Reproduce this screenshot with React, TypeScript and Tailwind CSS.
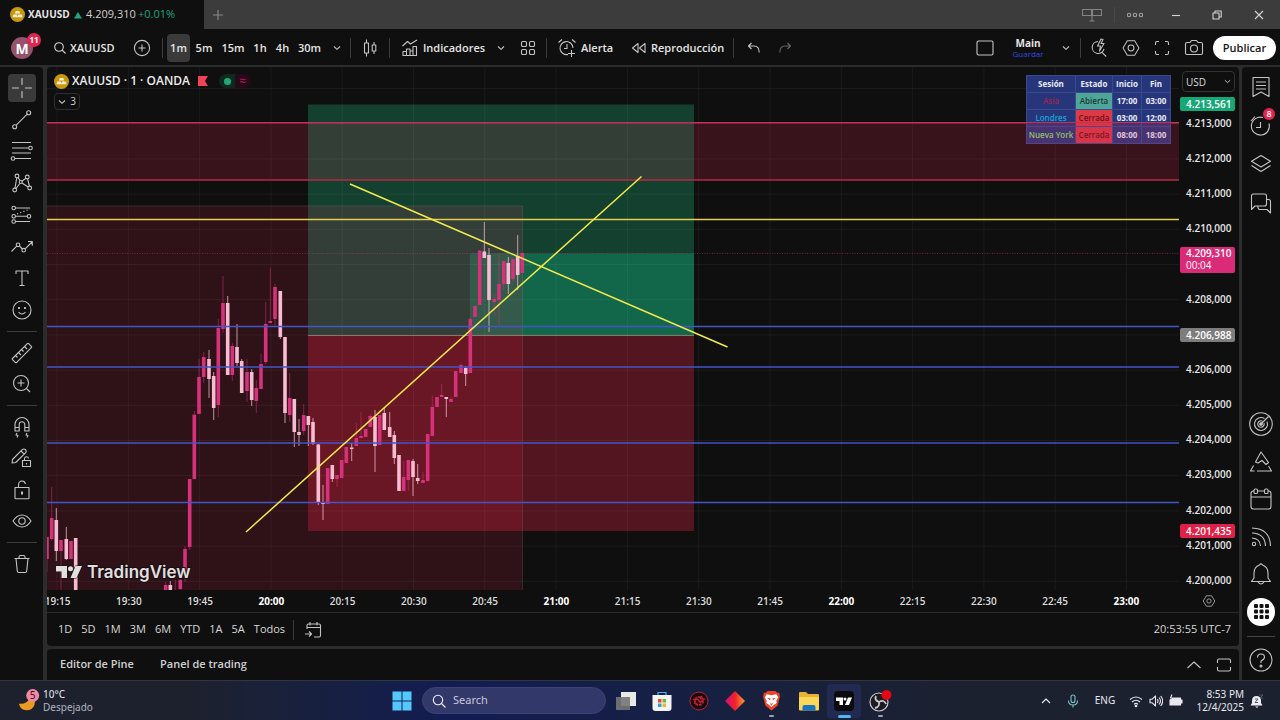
import type { ReactNode } from "react";

const APP_FONT = "font-['Open_Sans','Noto_Sans',sans-serif]";

function Icon({ children, size = "size-6", color = "text-[#c4c4c4]", box = 24 }: { children: ReactNode; size?: string; color?: string; box?: number }) {
  return (
    <svg viewBox={`0 0 ${box} ${box}`} className={`${size} ${color} shrink-0`} fill="none" stroke="currentColor" strokeWidth="1.1" strokeLinejoin="round" aria-hidden="true">
      {children}
    </svg>
  );
}

function Gold({ size }: { size: string }) {
  return (
    <svg viewBox="0 0 16 16" className={`${size} shrink-0`} aria-hidden="true">
      <circle cx="8" cy="8" r="8" fill="#c9980f" />
      <path d="M6.2 4.3h3.6l1 2.7H5.2zM3.6 8h3.7l.9 2.8H2.7zM8.7 8h3.7l.9 2.8H7.8z" fill="#f7efd8" />
    </svg>
  );
}

function Chevron({ className = "size-2" }: { className?: string }) {
  return (
    <svg viewBox="0 0 8 8" className={`${className} shrink-0 text-[#c4c4c4]`} fill="none" stroke="currentColor" strokeWidth="1.1" aria-hidden="true">
      <path d="M1 2.5 4 5.3 7 2.5" />
    </svg>
  );
}

function Divider() {
  return <span className="h-5 w-px shrink-0 bg-[#3c3c3c]" />;
}

function Hexagon({ size }: { size: string }) {
  return (
    <Icon size={size}>
      <path d="M8 4.2h8L20.7 12 16 19.8H8L3.3 12z" />
      <circle cx="12" cy="12" r="3.2" />
    </Icon>
  );
}

function TitleBar() {
  return (
    <header className="flex h-[29px] shrink-0 bg-[#3c3c3c] text-[11px]">
      <div className="flex w-[204px] items-center bg-[#0f0f0f] pl-[10px]">
        <Gold size="size-[15px]" />
        <span className="ml-[3px] w-[43px] text-[10px] font-bold text-[#e4e4e4]">XAUUSD</span>
        <svg viewBox="0 0 8 8" className="ml-[3px] size-2 shrink-0" aria-hidden="true"><path d="M4 1 8 7.5H0z" fill="#22a47c" /></svg>
        <span className="ml-[4px] w-[48px] whitespace-nowrap text-[#d0d0d0]">4.209,310</span>
        <span className="ml-1 text-[#22a47c]">+0.01%</span>
      </div>
      <button aria-label="Nueva pestaña" className="flex w-7 items-center justify-center">
        <Icon size="size-3" color="text-[#8a8a8a]" box={12}><path d="M6 1v10M1 6h10" /></Icon>
      </button>
      <div className="ml-auto flex items-center">
        <button aria-label="Vistas" className="flex w-[44px] justify-center">
          <Icon size="size-5" color="text-[#858585]" box={20}><path d="M.5 4.5h9v6h-9zM10.500 4.500h9v6h-9zM10 4v12M7.500 16h5" /></Icon>
        </button>
        <button aria-label="Más" className="flex w-[41px] justify-center border-l border-[#4a4a4a]">
          <Icon size="size-4" color="text-[#a0a0a0]" box={16}><circle cx="2" cy="8" r="1.700" /><circle cx="8" cy="8" r="1.700" /><circle cx="14" cy="8" r="1.700" /></Icon>
        </button>
        <button aria-label="Minimizar" className="flex w-[41px] justify-center"><Icon size="size-3" color="text-[#d4d4d4]" box={12}><path d="M2 6.500h8" /></Icon></button>
        <button aria-label="Restaurar" className="flex w-[42px] justify-center"><Icon size="size-3" color="text-[#d4d4d4]" box={12}><path d="M2 4h6v6H2zM4 4V2h6.200v6H8" /></Icon></button>
        <button aria-label="Cerrar" className="mr-px flex w-[41px] justify-center"><Icon size="size-3" color="text-[#d4d4d4]" box={12}><path d="m2 2 8 8M10 2l-8 8" /></Icon></button>
      </div>
    </header>
  );
}

const intervals = [
  { label: "1m", width: "w-[23px] bg-[#3a3a3a]" },
  { label: "5m", width: "w-[28px]" },
  { label: "15m", width: "w-[30px]" },
  { label: "1h", width: "w-[24px]" },
  { label: "4h", width: "w-[21px]" },
  { label: "30m", width: "w-[33px]" },
];

function Toolbar() {
  return (
    <nav className="flex h-9 shrink-0 items-center bg-[#0f0f0f] pt-[2px] text-[11px] font-semibold text-[#e4e4e4]">
      <button aria-label="Perfil" className="relative ml-[11px] flex size-[22px] items-center justify-center rounded-full bg-[#96526d] text-[14px] font-bold text-white">
        M
        <span className="absolute -top-1 left-[16px] flex size-[14px] items-center justify-center rounded-full bg-[#e0264e] text-[8px] leading-none font-bold">11</span>
      </button>
      <button className="ml-[21px] flex w-[63px] items-center gap-1 whitespace-nowrap">
        <Icon size="size-3" color="text-[#d8d8d8]" box={12}><circle cx="5" cy="5" r="4.300" /><path d="m8.200 8.200 3.300 3.300" /></Icon>
        XAUUSD
      </button>
      <button aria-label="Comparar" className="ml-[15px] flex size-5 items-center justify-center">
        <Icon size="size-[18px]" box={18}><circle cx="9" cy="9" r="7.600" /><path d="M9 5.500v7M5.500 9h7" /></Icon>
      </button>
      <span className="w-[10px]" />
      <Divider />
      <div className="ml-1 flex items-center">
        {intervals.map((i) => (
          <button key={i.label} className={`${i.width} h-7 rounded text-center`}>{i.label}</button>
        ))}
      </div>
      <button aria-label="Intervalos" className="flex w-[21px] justify-center"><Chevron /></button>
      <span className="w-[3px]" />
      <Divider />
      <button aria-label="Velas" className="flex w-[38px] justify-center">
        <Icon size="size-5" box={20}><path d="M6.500 1.500V5M6.500 15v3.500M4.500 5h4v10h-4zM14 4v3M14 13v3M12.200 7h3.600v6h-3.600z" /></Icon>
      </button>
      <Divider />
      <button className="ml-[11px] flex w-[86px] items-center gap-1">
        <Icon size="size-[18px]" box={18}><path d="m1.500 7 5-4.500 3 2.500 6.500-4M2 16.500v-4h3.500v4zM5.500 16.500V10H9v6.500zM9 16.500V12h3v4.500M12 16.500v-9h3.500v9zM9 16.500h3" /></Icon>
        Indicadores
      </button>
      <button aria-label="Favoritos" className="flex w-[28px] justify-center"><Chevron /></button>
      <button aria-label="Plantillas" className="flex w-[25px] justify-center">
        <Icon size="size-4" box={16}><rect x="1.500" y="1.500" width="5" height="5" rx="1.300" /><rect x="9.500" y="1.500" width="5" height="5" rx="1.300" /><rect x="1.500" y="9.500" width="5" height="5" rx="1.300" /><rect x="9.500" y="9.500" width="5" height="5" rx="1.300" /></Icon>
      </button>
      <span className="w-1.5" />
      <Divider />
      <button className="ml-[10px] flex w-[62px] items-center gap-1">
        <Icon size="size-5" box={20}><path d="M16 10a6.500 6.500 0 1 0-5 6.400M10 6v4.500H7M1.500 4.500l3.500-3M15 1.500l3.500 3M14.500 12v7M11 15.500h7" /></Icon>
        Alerta
      </button>
      <button className="ml-[12px] flex w-[96px] items-center gap-1">
        <Icon size="size-4" box={16}><path d="M7 3.500v9L1.500 8zM14 3.500v9L8.500 8z" /></Icon>
        Reproducción
      </button>
      <span className="w-[6px]" />
      <Divider />
      <button aria-label="Deshacer" className="ml-[10px] flex w-5 justify-center">
        <Icon size="size-4" box={16}><path d="M5.500 3 2.500 6l3 3M2.500 6H8q5.200 0 5.200 6.500" /></Icon>
      </button>
      <button aria-label="Rehacer" className="ml-[11px] flex w-5 justify-center">
        <Icon size="size-4" color="text-[#666666]" box={16}><path d="m10.500 3 3 3-3 3M13.500 6H8q-5.200 0-5.200 6.500" /></Icon>
      </button>
      <div className="ml-auto flex items-center">
        <button aria-label="Diseño" className="flex w-5 justify-center">
          <Icon size="size-[18px]" box={18}><rect x="1" y="2" width="16" height="14" rx="1.500" /></Icon>
        </button>
        <button className="ml-[13px] flex w-[40px] flex-col items-center">
          <span className="text-[10px] leading-[12px] font-bold">Main</span>
          <span className="text-[8px] leading-[10px] font-normal text-[#3249e0]">Guardar</span>
        </button>
        <button aria-label="Diseños guardados" className="ml-[7px] flex w-[22px] justify-center"><Chevron /></button>
        <span className="w-[3px]" />
        <Divider />
        <button aria-label="Búsqueda rápida" className="ml-[8px] flex w-5 justify-center">
          <Icon size="size-5" box={20}><path d="M9 3.500a6 6 0 1 0 6 7.500M13.200 14.700l4 3.800M12 1 8.500 8h3l-1 5 4.500-7.500h-3L14 1.500z" /></Icon>
        </button>
        <button aria-label="Ajustes" className="ml-[12px] flex w-5 justify-center"><Hexagon size="size-[22px]" /></button>
        <button aria-label="Pantalla completa" className="ml-[11px] flex w-5 justify-center">
          <Icon size="size-4" box={16}><path d="M1.500 5V3q0-1.500 1.500-1.500h2M11 1.500h2q1.500 0 1.500 1.500v2M14.500 11v2q0 1.500-1.500 1.500h-2M5 14.500H3q-1.500 0-1.500-1.500v-2" /></Icon>
        </button>
        <button aria-label="Captura" className="ml-[12px] flex w-5 justify-center">
          <Icon size="size-5" box={20}><path d="M3 4.500h3l1.500-2h5l1.500 2h3q1.500 0 1.500 1.500v9q0 1.500-1.500 1.500H3q-1.500 0-1.500-1.500V6Q1.500 4.500 3 4.500z" /><circle cx="10" cy="10.500" r="3.500" /></Icon>
        </button>
        <button className="mr-1 ml-[9px] h-6 w-[63px] rounded-full bg-white text-[#161616]">Publicar</button>
      </div>
    </nav>
  );
}

const drawIcons: { name: string; art: ReactNode }[] = [
  { name: "Cruz", art: <path d="M2 12h7M15 12h7M12 2v7M12 15v7" /> },
  { name: "Línea de tendencia", art: <><circle cx="4.700" cy="18.700" r="2" /><circle cx="18.700" cy="4.700" r="2" /><path d="M6.200 17.200 17.200 6.200" /></> },
  { name: "Fibonacci", art: <><path d="M2 3.500h19M2 9h16.500M2 14h19M5 19.500h16" /><circle cx="20.500" cy="9" r="1.800" /><circle cx="3" cy="19.500" r="1.800" /></> },
  { name: "Patrones", art: <><path d="M6.700 7 5 17M7.800 6.500l2.400 3.200M11.800 10.200l4.200-3M17.600 8l1.800 7M12 12l6 4M9.800 12.500 6 17.500" /><circle cx="7" cy="5" r="1.900" /><circle cx="17.300" cy="6" r="1.900" /><circle cx="19.700" cy="17" r="1.900" /><circle cx="4.700" cy="19" r="1.900" /><circle cx="10.700" cy="11" r="1.500" /></> },
  { name: "Previsión", art: <><circle cx="3.700" cy="5" r="1.800" /><circle cx="3.700" cy="13.300" r="1.800" /><circle cx="19" cy="13.300" r="1.800" /><circle cx="3.700" cy="18.500" r="1.800" /><path d="M5.500 5H20M5.500 13.300h11.700M5.500 18.500H20" /><path d="m7 11 13-5" strokeDasharray="1.200 2.200" /></> },
  { name: "Patrón de flecha", art: <><path d="m1.500 16.500 5.200-5.300M9.500 11l2.800 3M15.200 13.800 22 7M18 6.500h4.300v4.300" /><circle cx="8" cy="9.800" r="1.800" /><circle cx="13.700" cy="15.200" r="1.800" /></> },
  { name: "Texto", art: <path d="M6 8V5h12v3M12 5v14.500M9.500 19.500h5" /> },
  { name: "Emojis", art: <><circle cx="12" cy="12" r="9" /><path d="M8.500 14q3.500 4 7 0" /><path d="M9 9v2M15 9v2" strokeWidth="1.800" /></> },
];

const measureIcons: { name: string; art: ReactNode }[] = [
  { name: "Medir", art: <path d="M2.500 17.500 17.300 2.700q.7-.7 1.400 0l2.600 2.600q.7.700 0 1.400L6.700 21.300q-.7.700-1.400 0l-2.800-2.600q-.7-.7 0-1.200zM5.500 14.500l2 2M8.500 11.500l2.500 2.500M11.500 8.500l2 2M14.500 5.500l2.500 2.500" /> },
  { name: "Acercar", art: <><circle cx="11" cy="11" r="7.500" /><path d="M11 7.500v7M7.500 11h7M16.500 16.500l3.500 3.500" /></> },
];

const lockIcons: { name: string; art: ReactNode }[] = [
  { name: "Imán", art: <path d="M5 16V9.500a7 7 0 0 1 14 0V16h-4.200V9.500a2.800 2.800 0 0 0-5.600 0V16zM5 12.500h4.200M14.800 12.500H19M7 18l-1 2 2 .5-1 2M17 18l-1 2 2 .5-1 2" /> },
  { name: "Mantener dibujo", art: <path d="m2.500 13.500 9.700-9.800q1.800-1.400 3.300 0 1.500 1.500 0 3.200l-9.800 9.600-3.700.5zM11 5l3.300 3.200M12.500 14.500h8v6h-8zM14.500 14.500V12.500q.2-1.800 2-1.800t2 1.800M16.500 17v1.500" /> },
  { name: "Bloquear", art: <><path d="M5 9.500h14v10.500q0 .8-.8.800H5.800q-.8 0-.8-.8zM8.500 9.500V7q0-4 3.500-4 3 0 3.400 3" /><path d="M12 13.500v3" strokeWidth="2" /></> },
  { name: "Ocultar", art: <><path d="M3 12q3.800-6 9-6t9 6q-3.800 6-9 6t-9-6z" /><circle cx="12" cy="12" r="3.200" /></> },
];

function DrawButton({ name, art, active = false }: { name: string; art: ReactNode; active?: boolean }) {
  return (
    <button aria-label={name} className={`flex size-7 items-center justify-center rounded ${active ? "bg-[#3a3a3a]" : ""}`}>
      <Icon>{art}</Icon>
    </button>
  );
}

function DrawBar() {
  return (
    <aside className="flex w-[43px] shrink-0 flex-col items-center rounded-tr bg-[#0f0f0f] pt-[7px]">
      <div className="flex h-[250px] flex-col justify-between">
        {drawIcons.map((d, n) => <DrawButton key={d.name} {...d} active={n === 0} />)}
      </div>
      <span className="my-[7px] h-px w-[30px] bg-[#3c3c3c]" />
      <div className="flex h-[59px] flex-col justify-between">
        {measureIcons.map((d) => <DrawButton key={d.name} {...d} />)}
      </div>
      <span className="my-[7px] h-px w-[30px] bg-[#3c3c3c]" />
      <div className="flex h-[122px] flex-col justify-between">
        {lockIcons.map((d) => <DrawButton key={d.name} {...d} />)}
      </div>
      <span className="my-[7px] h-px w-[30px] bg-[#3c3c3c]" />
      <DrawButton name="Eliminar" art={<path d="M4.500 6.500h15M9 6.500V5q0-1.500 1.500-1.500h3Q15 3.500 15 5v1.500M6 6.500l1.300 12.700q.2 1.300 1.500 1.300h6.400q1.300 0 1.500-1.300L18 6.500" />} />
    </aside>
  );
}

// Each candle: centre x, body top, body bottom, wick top, wick bottom, 1 = rising.
const candles: number[][] = [
  [47, 537, 559, 537, 572, 1], [51.7, 518, 539, 487, 541, 1], [56.3, 520, 551, 508, 561, 0], [61, 540, 551, 540, 590, 1],
  [66.3, 539, 559, 527, 560, 0], [71, 541, 559, 541, 559, 1], [75.7, 538, 590, 538, 590, 0], [165.7, 585, 590, 582, 590, 1],
  [170.3, 585, 590, 581, 590, 0], [175.300, 590, 590, 580, 590, 1], [180.3, 580, 589, 578, 590, 1], [185, 549, 572, 546, 582, 1],
  [189.7, 479, 547, 479, 550, 1], [194.3, 414.7, 479, 411, 479, 1], [199, 377, 414, 359, 414, 1], [203.7, 357, 377, 352, 383, 1],
  [209, 359, 379, 350, 398, 0], [213.7, 376, 408, 372, 420, 0], [218.3, 328, 405, 319, 417, 1], [223, 303, 329, 276, 333, 1],
  [227.7, 303, 375, 296, 375, 0], [232.3, 346, 375, 343, 381, 1], [237, 347, 363, 324, 366, 0], [241.7, 361, 393, 359, 393, 0],
  [247, 372, 391, 359, 402, 1], [251.7, 372, 400, 369, 406, 0], [256.3, 388, 401, 380, 413, 1], [261, 364, 389, 354, 389, 1],
  [265.7, 324, 362, 302, 364, 1], [270.3, 321, 323, 268, 323, 1], [275, 287, 319, 284, 327, 1], [280.3, 291, 337, 291, 339, 0],
  [285, 337, 413, 337, 423, 0], [289.7, 398, 415, 373, 422, 1], [294.3, 399, 432, 399, 447, 0], [299, 432, 435, 419, 446, 0],
  [303.7, 415, 431, 404, 435, 1], [308.3, 416, 425, 416, 446, 0], [313, 422, 444, 418, 445, 0], [318.3, 444.5, 502, 444, 505, 0],
  [323, 502.5, 504, 485, 520, 0], [327.7, 468, 504, 468, 504, 1], [332.3, 465, 479, 465, 482, 0], [337, 475, 479, 475, 487, 1],
  [341.7, 460, 478, 460, 478, 1], [346.3, 447, 463, 447, 463, 1], [351.7, 447.5, 449, 443, 461, 0], [356.3, 438, 446, 423, 446, 1],
  [361, 436, 438, 412, 438, 1], [365.7, 429, 437, 429, 437, 1], [370.3, 416, 427, 414, 427, 1], [375, 417, 446, 410, 472, 0],
  [379.7, 415, 445, 415, 445, 1], [384.3, 413, 430, 408, 430, 0], [389.7, 427, 437, 412, 437, 0], [394.3, 435, 458, 431, 464, 0],
  [399, 455, 491, 455, 491, 0], [403.7, 477, 491, 461, 491, 1], [408.3, 460, 480, 460, 491, 1], [413, 461, 477, 459, 496, 0],
  [417.7, 478, 481, 464, 484, 0], [423, 480, 483, 472, 483, 1], [427.7, 434, 481, 434, 481, 1], [432.3, 407, 436, 396, 436, 1],
  [437, 397, 407, 397, 407, 1], [441.7, 395, 397, 384, 397, 1], [446.3, 397, 399, 397, 417, 0], [451, 399, 402, 397, 402, 1],
  [455.7, 371, 397, 371, 397, 1], [461, 365, 373, 364, 373, 1], [465.7, 368, 374, 366, 386, 0], [470.3, 319, 373, 318, 373, 1],
  [475, 306, 317, 305, 317, 1], [479.7, 250.5, 305, 250, 305, 1], [484.3, 251.500, 258, 222, 258, 0], [489, 255, 300, 248, 332, 0],
  [494.3, 299, 302, 295, 316, 1], [499, 284, 300, 253, 327, 1], [503.7, 261, 284, 261, 290, 1], [508.3, 263, 284, 257, 294, 0],
  [513, 259, 279, 259, 282, 1], [517.7, 256, 275, 235, 290, 0], [522.3, 253, 273, 253, 273, 1],
];

const gridX = Array.from({ length: 16 }, (_, i) => 57 + i * 71.3);
const gridY = Array.from({ length: 15 }, (_, i) => 88.5 + i * 35.2);

function Plot() {
  return (
    <svg viewBox="47 67 1132 523" preserveAspectRatio="none" className="absolute inset-0 size-full" role="img" aria-label="Gráfico XAUUSD 1 minuto">
      <rect x="47" y="122.700" width="1133" height="57.500" fill="#38131c" />
      <rect x="47" y="206" width="475.500" height="384" fill="#2f1218" />
      <rect x="308" y="104.500" width="386" height="231" fill="#14412f" />
      <rect x="308" y="122.700" width="386" height="57.500" fill="#333f36" />
      <rect x="308" y="206" width="214.500" height="129.500" fill="#323e37" />
      <rect x="470" y="253.500" width="224" height="82" fill="#12674b" />
      <rect x="470" y="253.500" width="52.500" height="82" fill="#345a4b" />
      <rect x="308" y="335.500" width="386" height="195.500" fill="#53151f" />
      <rect x="308" y="335.500" width="214.500" height="195.500" fill="#6a1725" />
      <g stroke="#ffffff" strokeOpacity="0.05">
        {gridX.map((x) => <path key={x} d={`M${x} 67V590`} />)}
        {gridY.map((y) => <path key={y} d={`M47 ${y}H1180`} />)}
      </g>
      <g fill="none" strokeWidth="1">
        <path d="M47 206H522.500V590" stroke="#8f8f7a" strokeOpacity="0.22" />
        <path d="M47 253.500H1180" stroke="#e0357c" strokeOpacity="0.45" strokeDasharray="1 1.500" />
        <path d="M308 335.500H694" stroke="#a39a86" strokeOpacity="0.7" />
      </g>
      {candles.map(([x, top, bottom, high, low, up]) => (
        <g key={x} fill={up ? "#d6317a" : "#f7bcd2"}>
          <rect x={x - 0.5} y={high} width="1" height={low - high} opacity={up ? 0.5 : 0.75} />
          <rect x={x - 1.8} y={top} width="3.600" height={bottom - top} />
        </g>
      ))}
      <g fill="none" strokeWidth="1.600">
        <path d="M47 122.700H1180" stroke="#c62f53" />
        <path d="M47 180H1180" stroke="#b52b40" />
        <path d="M47 219.500H1180" stroke="#e3cf4d" />
        <path d="M47 326.500H1180M47 367H1180M47 443H1180M47 502.500H1180" stroke="#4156c8" strokeWidth="1.500" />
        <path d="M246 532 641.500 176.500M350 184l377.500 163" stroke="#f1ea4c" strokeWidth="1.500" />
      </g>
    </svg>
  );
}

const sessions = [
  { name: "Asia", color: "text-[#a3214f]", open: true, from: "17:00", to: "03:00" },
  { name: "Londres", color: "text-[#17a5d6]", open: false, from: "03:00", to: "12:00" },
  { name: "Nueva York", color: "text-[#86e06c]", open: false, from: "08:00", to: "18:00" },
];

function SessionTable() {
  return (
    <div className="absolute top-[8px] right-[8px] overflow-hidden">
      <table className="w-[144px] table-fixed border-collapse text-center text-[8px] leading-none font-semibold text-[#e8ebf8]">
        <colgroup><col className="w-[49px]" /><col className="w-[37px]" /><col className="w-[29px]" /><col className="w-[29px]" /></colgroup>
        <thead>
          <tr className="h-[17px] bg-[#27367b]">
            {["Sesión", "Estado", "Inicio", "Fin"].map((h) => <th key={h} className="border border-[#3a4a8f] p-0 font-bold">{h}</th>)}
          </tr>
        </thead>
        <tbody>
          {sessions.map((s) => (
            <tr key={s.name} className="h-[17px] bg-[#27367b] whitespace-nowrap">
              <td className={`border border-[#3a4a8f] p-0 ${s.color}`}>{s.name}</td>
              <td className={`border border-[#3a4a8f] p-0 ${s.open ? "bg-[#4fa698] text-[#173a36]" : "bg-[#dd3a48] text-[#6e1019]"}`}>{s.open ? "Abierta" : "Cerrada"}</td>
              <td className="border border-[#3a4a8f] p-0 font-bold">{s.from}</td>
              <td className="border border-[#3a4a8f] p-0 font-bold">{s.to}</td>
            </tr>
          ))}
        </tbody>
      </table>
      <span className="absolute inset-x-0 top-[47px] bottom-0 border-t border-[#c62f53] bg-[#c62a4c]/20" />
    </div>
  );
}

const prices = Array.from({ length: 14 }, (_, i) => `4.2${String(13 - i).padStart(2, "0")},000`);
const times = ["19:15", "19:30", "19:45", "20:00", "20:15", "20:30", "20:45", "21:00", "21:15", "21:30", "21:45", "22:00", "22:15", "22:30", "22:45", "23:00"];
const ranges = ["1D", "5D", "1M", "3M", "6M", "YTD", "1A", "5A", "Todos"];

function PriceScale() {
  return (
    <div className="relative flex w-[60px] shrink-0 flex-col text-[10px] leading-4 font-semibold text-[#e8e8e8]">
      <div className="relative mt-[4px] ml-[3px] h-[21px] w-[53px]">
        <select aria-label="Moneda" className="h-full w-full appearance-none rounded border border-[#333333] bg-[#0f0f0f] pl-[3px] text-[10px] leading-[18px] font-normal text-[#dcdcdc]"><option>USD</option></select>
        <span className="pointer-events-none absolute top-[7px] right-1"><Chevron className="size-[7px]" /></span>
      </div>
      <ul className="mt-[23px] mb-[2px] flex flex-1 flex-col justify-between pl-[7px]">
        {prices.map((p) => <li key={p} className="h-4">{p === "4.209,000" ? null : p}</li>)}
      </ul>
      <span className="absolute top-[30px] left-px h-[14px] w-[55px] rounded-[2px] bg-[#17a877] pl-[6px] leading-[14px] text-white">4.213,561</span>
      <span className="absolute top-[180px] left-px h-[26px] w-[55px] rounded-[2px] bg-[#d92b78] pl-[6px] text-white">
        <span className="block h-[13px] leading-[13px]">4.209,310</span>
        <span className="block h-[12px] leading-[11px] font-normal">00:04</span>
      </span>
      <span className="absolute top-[261px] left-px h-[14px] w-[55px] rounded-[2px] bg-[#7d7d7d] pl-[6px] leading-[14px] text-white">4.206,988</span>
      <span className="absolute top-[457px] left-px h-[14px] w-[55px] rounded-[2px] bg-[#df2149] pl-[6px] leading-[14px] text-white">4.201,435</span>
    </div>
  );
}

function Legend() {
  return (
    <div className="absolute top-[6px] left-[7px]">
      <div className="flex h-4 items-center text-[12px] font-semibold text-[#ececec]">
        <Gold size="size-[15px]" />
        <span className="ml-[3px] w-[117px] leading-4 whitespace-nowrap">XAUUSD · 1 · OANDA</span>
        <svg viewBox="0 0 10 10" className="ml-[9px] size-[10px]" aria-hidden="true"><path d="M0 0h10L7 5l3 5H0z" fill="#ee4359" /></svg>
        <span className="ml-[11px] flex h-[14px] w-[16px] items-center justify-center rounded-l-full bg-[#10291f]"><i className="size-[7px] rounded-full bg-[#20a87a]" /></span>
        <span className="flex h-[14px] w-[16px] items-center justify-center rounded-r-full bg-[#260a18] text-[12px] leading-none font-normal text-[#c01c60]">≈</span>
      </div>
      <button className="mt-[4px] flex h-[17px] w-[26px] items-center justify-center gap-1 rounded-sm border border-[#2e2e2e] bg-[#0f0f0f] text-[10px] text-[#d0d0d0]">
        <Chevron />3
      </button>
    </div>
  );
}

function Watermark() {
  return (
    <div className="absolute bottom-[6px] left-[9px] flex items-center gap-[5px] text-[#e0e0e0]">
      <svg viewBox="0 0 26 14" className="h-[14px] w-[26px]" aria-hidden="true">
        <g fill="#e0e0e0" stroke="#120b0d" strokeWidth="1" paintOrder="stroke">
          <path d="M0 1h11v12H5.500V6.500H0z" /><circle cx="14.500" cy="3.700" r="2.500" /><path d="M19.500 1H26l-5.500 12H14.500z" />
        </g>
      </svg>
      <span className="font-[Inter,'Noto_Sans',sans-serif] text-[17px] leading-6 font-semibold [paint-order:stroke] [-webkit-text-stroke:2px_#1a0b0f]">TradingView</span>
    </div>
  );
}

function ChartPanel() {
  return (
    <section className="flex min-h-0 flex-1 flex-col rounded bg-[#0f0f0f]">
      <div className="flex min-h-0 flex-1">
        <div className="relative min-w-0 flex-1 overflow-hidden">
          <Plot />
          <Legend />
          <SessionTable />
          <Watermark />
        </div>
        <PriceScale />
      </div>
      <div className="flex h-[23px] shrink-0 items-center overflow-hidden border-b border-[#2a2a2a] text-[10px] text-[#dcdcdc]">
        <ol className="mr-[39px] -ml-[25px] grid flex-1 grid-cols-16 text-center">
          {times.map((t) => <li key={t} className={t.endsWith(":00") ? "font-bold text-white" : "font-semibold"}>{t}</li>)}
        </ol>
        <button aria-label="Ajustes de escala" className="mr-[22px] shrink-0"><Hexagon size="size-4" /></button>
      </div>
      <div className="flex h-[33px] shrink-0 items-center pr-[8px] pl-[11px] text-[11px] font-medium text-[#d8d8d8]">
        <div className="flex items-center gap-[9px]">
          {ranges.map((r) => <button key={r}>{r}</button>)}
        </div>
        <span className="w-2" />
        <Divider />
        <button aria-label="Ir a" className="ml-[10px]">
          <Icon size="size-[18px]" box={18}><path d="M3 8V4.500Q3 3 4.500 3h10.500q1.500 0 1.500 1.500v10q0 1.500-1.500 1.500H10M3 6.500h13.500M6 1v3.500M13 1v3.500M1 13h6.500M5 10.500 7.500 13 5 15.500" /></Icon>
        </button>
        <time className="ml-auto">20:53:55 UTC-7</time>
      </div>
    </section>
  );
}

function SideButton({ name, children, badge }: { name: string; children: ReactNode; badge?: string }) {
  return (
    <button aria-label={name} className="relative flex h-7 w-7 items-center justify-center">
      <Icon>{children}</Icon>
      {badge && <span className="absolute -top-1 left-[16px] flex size-3 items-center justify-center rounded-full bg-[#e0264e] text-[9px] leading-none font-semibold text-white">{badge}</span>}
    </button>
  );
}

function SideBar() {
  return (
    <aside className="flex w-[38px] shrink-0 flex-col items-center rounded-tl bg-[#0f0f0f] pt-[6px] pb-[6px]">
      <div className="flex h-[144px] flex-col justify-between">
        <SideButton name="Lista de seguimiento"><path d="M4 2.500h16v19L12 17l-8 4.500zM7 7h10M7 10.500h10M7 14h10" /></SideButton>
        <SideButton name="Alertas" badge="8"><path d="M20 9.500a9 9 0 1 1-6-6M11.500 8v5.500H7M2 7l4-4.500" /></SideButton>
        <SideButton name="Capas"><path d="m12 3.500 9.500 5.800L12 15 2.500 9.300zM2.500 13.500 12 19.500l9.500-6" /></SideButton>
        <SideButton name="Chats"><path d="M2.500 18.500V5q0-2 2-2h11q2 0 2 2v8q0 2-2 2H6zM17.500 8.500h2q2 0 2 2V22l-3.500-3.500h-7.500q-1.500 0-1.700-3.500" /></SideButton>
      </div>
      <div className="mt-auto flex h-[216px] flex-col justify-between">
        <SideButton name="Explorador"><circle cx="12" cy="12" r="11.300" /><path d="M15.500 6.500A6.500 6.500 0 1 0 18 9.500M13.500 9.200a3.200 3.200 0 1 0 1.500 1.800M12 12l7.500-7.500" /><circle cx="12" cy="12" r="1.300" fill="currentColor" /></SideButton>
        <SideButton name="Ideas"><path d="m12 2 7.500 10.500-2.500 2-4-4-4 2.500-2.500-1zM4.500 15.500 1.500 21h4M8 21h14.500l-3-5" /></SideButton>
        <SideButton name="Calendario"><path d="M4.500 4h15q2.500 0 2.500 2.500v13q0 2.500-2.500 2.500h-15Q2 22 2 19.500v-13Q2 4 4.500 4zM2 10h20" /><rect x="5" y="2" width="3.500" height="4.500" rx="1.300" fill="#0f0f0f" /><rect x="15.500" y="2" width="3.500" height="4.500" rx="1.300" fill="#0f0f0f" /></SideButton>
        <SideButton name="Noticias"><circle cx="5" cy="19" r="1.700" /><path d="M3 13q8 .5 8.500 8M3 8q13 .5 13.500 13M3 3q18 .5 18.500 18" /></SideButton>
        <SideButton name="Notificaciones"><path d="M10.500 3Q12 .8 13.500 3 19 5 19 11v5l2.500 3.500h-19L5 16v-5q0-6 5.500-8zM9 20q3 4 6 0" /></SideButton>
        <button aria-label="Más productos" className="flex size-7 items-center justify-center rounded-full bg-white">
          <svg viewBox="0 0 15 15" className="size-[15px]" fill="#111111" aria-hidden="true">
            {[0, 1, 2].flatMap((r) => [0, 1, 2].map((c) => <rect key={`${r}${c}`} x={c * 5.500} y={r * 5.500} width="4" height="4" rx="1" />))}
          </svg>
        </button>
      </div>
      <span className="mt-[10px] mb-[9px] h-px w-[28px] bg-[#444444]" />
      <SideButton name="Ayuda"><circle cx="12" cy="12" r="11" /><path d="M8.500 9.500q0-3.500 3.500-3.500t3.500 3.200Q15.500 11 12 13v2" /><circle cx="12" cy="18" r="1" /></SideButton>
    </aside>
  );
}

function Taskbar() {
  return (
    <footer className="flex h-10 shrink-0 items-center border-t border-[#33353f] bg-linear-to-r from-[#1d212e] from-15% via-[#131c52] via-35% to-[#1c2130] to-75% font-['Noto_Sans','Open_Sans',sans-serif] text-[10px] text-[#e8e8ee]">
      <div className="flex flex-1 basis-0">
        <button className="flex items-center text-left">
          <svg viewBox="0 0 24 26" className="ml-[17px] size-6 shrink-0" aria-hidden="true">
            <path d="M1 16q9 1 13-8 6 3 4 9-2 6-9 6-6 0-8-7z" fill="#eb9a25" />
            <circle cx="16" cy="7" r="7" fill="#f08aa4" />
            <text x="16" y="11" textAnchor="middle" fontSize="11" fill="#3c1020" fontFamily="Noto Sans">5</text>
          </svg>
          <span className="ml-[2px] leading-[13px]">10°C<br /><span className="text-[#b0b4c2]">Despejado</span></span>
        </button>
      </div>
      <div className="flex items-center">
        <button aria-label="Inicio" className="flex w-[41px] justify-center">
          <svg viewBox="0 0 20 20" className="size-5" fill="#54c8fb" aria-hidden="true"><path d="M.5.500h9v9h-9zM10.500.500h9v9h-9zM.5 10.500h9v9h-9zM10.500 10.500h9v9h-9z" /></svg>
        </button>
        <div className="flex h-[27px] w-[184px] items-center gap-[7px] rounded-full border border-[#3b4276] bg-[#32396a] pl-[9px]">
          <Icon size="size-[14px]" color="text-[#eeeef5]" box={14}><circle cx="6" cy="6" r="4.700" /><path d="m9.500 9.500 4 4" /></Icon>
          <input type="text" aria-label="Buscar" placeholder="Search" className="w-full min-w-0 bg-transparent text-[11px] outline-none placeholder:text-[#c5c8da]" />
        </div>
        <button aria-label="Vista de tareas" className="ml-[1px] flex w-[37px] justify-center">
          <svg viewBox="0 0 20 20" className="size-5" aria-hidden="true"><path d="M5 1h15v14H5z" fill="#e8e8e8" /><path d="M0 6h14v13H0z" fill="#757575" fillOpacity=".9" /></svg>
        </button>
        <button aria-label="Tienda" className="flex w-[36px] justify-center">
          <svg viewBox="0 0 20 20" className="size-5" aria-hidden="true"><path d="M6 5V1.500h8V5" fill="none" stroke="#46b4e8" strokeWidth="1.200" /><path d="M.5 4h19v13q0 3-3 3h-13q-3 0-3-3z" fill="#f4f4f4" /><path d="M6 8h3.500v3.500H6z" fill="#e5482c" /><path d="M10.500 8H14v3.500h-3.500z" fill="#7bb52c" /><path d="M6 12.500h3.500V16H6z" fill="#2c9fe0" /><path d="M10.500 12.500H14V16h-3.500z" fill="#f0b62b" /></svg>
        </button>
        <button aria-label="Nitro" className="flex w-[37px] justify-center">
          <svg viewBox="0 0 20 20" className="size-5" fill="none" stroke="#c51d2b" aria-hidden="true"><circle cx="10" cy="10" r="9" fill="#120c16" /><circle cx="10" cy="10" r="4" strokeWidth="2" strokeDasharray="2.500 1" /><path d="M4 8.500h5l2 3 5-4M5 12l3 1M13 5l-2 3" strokeWidth="1.500" /></svg>
        </button>
        <button aria-label="Rombo" className="flex w-[36px] justify-center">
          <svg viewBox="0 0 20 20" className="size-5" aria-hidden="true"><defs><linearGradient id="gem"><stop offset="0" stopColor="#d0127c" /><stop offset=".5" stopColor="#f0202c" /><stop offset="1" stopColor="#f7a030" /></linearGradient></defs><path d="m10 0 10 10-10 10L0 10z" fill="url(#gem)" /></svg>
        </button>
        <button aria-label="Brave" className="relative flex w-[37px] justify-center">
          <svg viewBox="0 0 20 22" className="size-[21px]" aria-hidden="true"><path d="M6 1h8l2 2 2 0 .8 4-2.500 9.500L10 21.500l-6.300-5L1.200 7 2 3l2 0z" fill="#ee4326" /><path d="m5 4.500 5 1 5-1 2 3-2 4 .5 2-3.500 2.500-2 2-2-2L4.500 13.500l.5-2-2-4z" fill="#fff" /><path d="m5.500 8 3.500 1-.5 2zM14.500 8 11 9l.5 2zM8 13.500l2 1 2-1-2 3z" fill="#ee4326" /></svg>
          <i className="absolute -bottom-[6px] h-[2px] w-[5px] rounded-full bg-[#9a9fb8]" />
        </button>
        <button aria-label="Explorador de archivos" className="flex w-[37px] justify-center">
          <svg viewBox="0 0 20 20" className="size-5" aria-hidden="true"><path d="M0 2q0-1 1-1h6l2 2h10q1 0 1 1v14H0z" fill="#e8b333" /><path d="M0 6h20v12.500q0 1-1 1H1q-1 0-1-1z" fill="#fad65a" /><path d="M3.500 19.500V16q0-2 2-2h9q2 0 2 2v3.500z" fill="#1c73bf" /></svg>
        </button>
        <button aria-label="TradingView" className="relative flex h-[34px] w-[34px] items-center justify-center rounded bg-[#222a52]">
          <svg viewBox="0 0 20 20" className="size-5" aria-hidden="true"><rect width="20" height="20" rx="4" fill="#0b0b0e" /><g fill="#fff"><path d="M2 6.500h7V14H5.500v-4H2z" /><circle cx="11" cy="8" r="1.500" /><path d="M14 6.500h4L15 14h-4z" /></g></svg>
          <i className="absolute bottom-0 h-[3px] w-[13px] rounded-full bg-[#4cb9f0]" />
        </button>
        <button aria-label="OBS" className="relative flex w-[38px] justify-center">
          <svg viewBox="0 0 24 22" className="h-[22px] w-6" aria-hidden="true"><circle cx="11" cy="12" r="9" fill="#1d1a20" stroke="#c9c9cf" strokeWidth="1.200" /><path d="M11 12q-5-2-3-6M11 12q5-3 7 2M11 12q1 5-4 6" fill="none" stroke="#c9c9cf" strokeWidth="1.800" /><circle cx="18.500" cy="5" r="5" fill="#e30613" /></svg>
          <i className="absolute -bottom-[5px] h-[2px] w-[5px] rounded-full bg-[#9a9fb8]" />
        </button>
      </div>
      <div className="flex flex-1 basis-0 items-center justify-end">
        <button aria-label="Iconos ocultos" className="flex w-5 justify-center"><Icon size="size-[10px]" color="text-[#e8e8ee]" box={10}><path d="m1 7 4-4 4 4" /></Icon></button>
        <span className="ml-[10px]"><Icon size="size-[14px]" color="text-[#7cc3cc]" box={14}><rect x="5" y="1" width="4" height="7.500" rx="2" /><path d="M2.500 6.500q0 4.500 4.500 4.500t4.500-4.500M7 11v2.500" /></Icon></span>
        <button className="ml-[13px] w-[24px]">ENG</button>
        <button className="ml-[12px] flex items-center gap-[6px]" aria-label="Red, volumen y batería">
          <Icon size="size-[14px]" color="text-[#e8e8ee]" box={14}><path d="M1 5.500q6-5 12 0M3 8q4-3.500 8 0M5 10.300q2-1.800 4 0" /><circle cx="7" cy="12" r=".8" fill="currentColor" /></Icon>
          <Icon size="size-[14px]" color="text-[#e8e8ee]" box={14}><path d="M1 5.300h2L6.500 2v10L3 8.700H1zM8.300 5q1.500 2 0 4M10 3.500q3 3.500 0 7M11.700 2q4 5 0 10" /></Icon>
          <Icon size="size-[14px]" color="text-[#e8e8ee]" box={14}><path d="M1 6v5h10.500V4H5zM11.500 6h1.500v3h-1.500" fill="currentColor" /><path d="M3 .5 1.500 4H4L2.500 6.500" /></Icon>
        </button>
        <time className="ml-[13px] w-[48px] text-right leading-[13px] whitespace-nowrap">8:53 PM<br />12/4/2025</time>
        <button aria-label="No molestar" className="mr-[16px] ml-[6px]">
          <svg viewBox="0 0 14 14" className="size-[14px]" aria-hidden="true"><path d="M2 7q0-5 4.500-5 4 0 4.500 4v3l1.500 2.500H.5L2 9zM5 12.500h3.500L7 14z" fill="#ececf2" /><path d="M5 5h3L5 8.500h3M9.500 1H13l-3 3h3" fill="none" stroke="#555b6b" /></svg>
        </button>
      </div>
    </footer>
  );
}

export default function App() {
  return (
    <div className={`flex h-screen min-h-[700px] flex-col overflow-hidden bg-[#2c2c2c] ${APP_FONT}`}>
      <TitleBar />
      <Toolbar />
      <div className="mt-[2px] flex min-h-0 flex-1">
        <DrawBar />
        <main className="mr-[3px] ml-[4px] flex min-w-0 flex-1 flex-col gap-[3px]">
          <ChartPanel />
          <section className="flex h-[31px] shrink-0 items-center rounded-t bg-[#0f0f0f] px-[13px] text-[11px] font-semibold text-[#cfcfcf]">
            <button className="w-[74px] text-left whitespace-nowrap">Editor de Pine</button>
            <button className="ml-[26px] whitespace-nowrap">Panel de trading</button>
            <button aria-label="Expandir" className="ml-auto"><Icon size="size-4" box={16}><path d="m1.500 11 6.500-6 6.500 6" /></Icon></button>
            <button aria-label="Maximizar" className="-mr-[6px] ml-[14px]"><Icon size="size-4" box={16}><path d="M1.500 6V3.500q0-1.500 1.500-1.500h10q1.500 0 1.500 1.500V6M1.500 10v2.500q0 1.500 1.500 1.500h10q1.500 0 1.500-1.500V10" /></Icon></button>
          </section>
        </main>
        <SideBar />
      </div>
      <Taskbar />
    </div>
  );
}
